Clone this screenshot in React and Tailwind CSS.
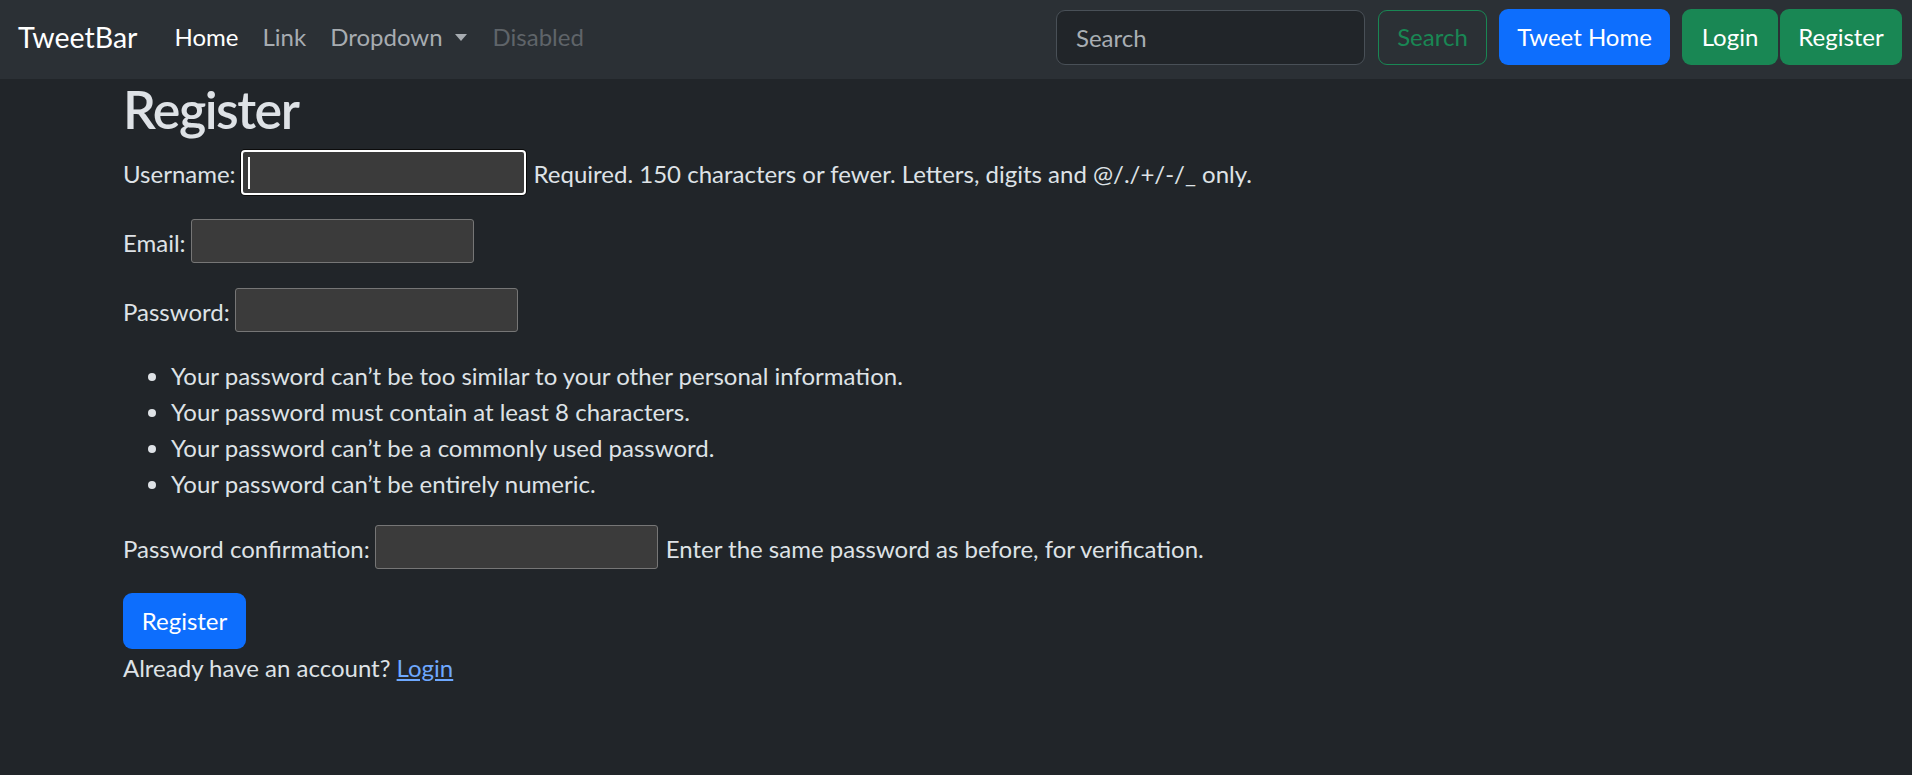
export default function App() {
  return (
    <div className="min-h-[775px] bg-[#212529] text-[#dee2e6] font-[Lato,sans-serif]">
      <nav className="h-[79px] bg-[#2b3035] flex items-start pt-[9px] pl-[18px] pr-[10px]">
        <a href="#" className="h-[56px] flex items-center text-[28.5px] text-white mr-[25px]">
          TweetBar
        </a>
        <ul className="flex h-[56px] items-center text-[24px]">
          <li className="px-[12px] text-white">Home</li>
          <li className="px-[12px] text-[#a7acb1]">Link</li>
          <li className="px-[12px] text-[#a7acb1] flex items-center">
            Dropdown
            <span className="ml-[12px] mr-[2px] w-0 h-0 border-x-[6px] border-x-transparent border-t-[7px] border-t-[#a7acb1]" />
          </li>
          <li className="px-[12px] text-[#5f6469]">Disabled</li>
        </ul>
        <div className="ml-auto flex items-center h-[56px] text-[24px]">
          <input
            placeholder="Search"
            className="w-[309px] h-[55px] rounded-[9px] border border-[#495057] bg-[#212529] px-[19px] text-[24px] text-[#dee2e6] placeholder:text-[#a9aeb3] outline-none"
          />
          <button className="ml-[13px] w-[109px] h-[55px] rounded-[9px] border border-[#198754] text-[#198754] flex items-center justify-center">
            Search
          </button>
          <button className="ml-[12px] w-[171px] h-[56px] rounded-[9px] bg-[#0d6efd] text-white flex items-center justify-center">
            Tweet Home
          </button>
          <button className="ml-[12px] w-[96px] h-[56px] rounded-[9px] bg-[#198754] text-white flex items-center justify-center">
            Login
          </button>
          <button className="ml-[2px] w-[122px] h-[56px] rounded-[9px] bg-[#198754] text-white flex items-center justify-center">
            Register
          </button>
        </div>
      </nav>

      <main className="pl-[123px] text-[24px]">
        <h1 className="mt-[5px] text-[52px] leading-[50px] font-semibold tracking-[-1.5px] text-[#dee2e6]">
          Register
        </h1>
        <form>
          <div className="mt-[16px] flex items-center h-[45px]">
            <label className="pt-[2px]">Username:</label>
            <div className="relative ml-[5px] w-[285px] h-[45px] rounded-[4px] border-2 border-white bg-[#3b3b3b] shadow-[0_0_0_1px_#0b0b0b]">
              <input className="w-full h-full bg-transparent outline-none" />
              <span className="absolute left-[5px] top-[5px] w-[2px] h-[32px] bg-white" />
            </div>
            <span className="ml-[8px] pt-[2px]">
              Required. 150 characters or fewer. Letters, digits and @/./+/-/_ only.
            </span>
          </div>

          <div className="mt-[24px] flex items-center h-[44px]">
            <label className="pt-[3px]">Email:</label>
            <input className="ml-[5px] w-[283px] h-[44px] rounded-[3px] border border-[#767676] bg-[#3b3b3b] outline-none" />
          </div>

          <div className="mt-[25px] flex items-center h-[44px]">
            <label className="pt-[3px]">Password:</label>
            <input
              type="password"
              className="ml-[5px] w-[283px] h-[44px] rounded-[3px] border border-[#767676] bg-[#3b3b3b] outline-none"
            />
          </div>

          <ul className="mt-[26px] list-disc pl-[48px] leading-[36px]">
            <li>Your password can’t be too similar to your other personal information.</li>
            <li>Your password must contain at least 8 characters.</li>
            <li>Your password can’t be a commonly used password.</li>
            <li>Your password can’t be entirely numeric.</li>
          </ul>

          <div className="mt-[23px] flex items-center h-[44px]">
            <label className="pt-[3px]">Password confirmation:</label>
            <input
              type="password"
              className="ml-[5px] w-[283px] h-[44px] rounded-[3px] border border-[#767676] bg-[#3b3b3b] outline-none"
            />
            <span className="ml-[8px] pt-[3px]">Enter the same password as before, for verification.</span>
          </div>

          <button
            type="button"
            className="mt-[24px] w-[123px] h-[56px] rounded-[9px] bg-[#0d6efd] text-white flex items-center justify-center"
          >
            Register
          </button>
        </form>
        <p className="leading-[36px] pt-[1px]">
          Already have an account?{" "}
          <a href="#" className="text-[#6ea8fe] underline">
            Login
          </a>
        </p>
      </main>
    </div>
  );
}
